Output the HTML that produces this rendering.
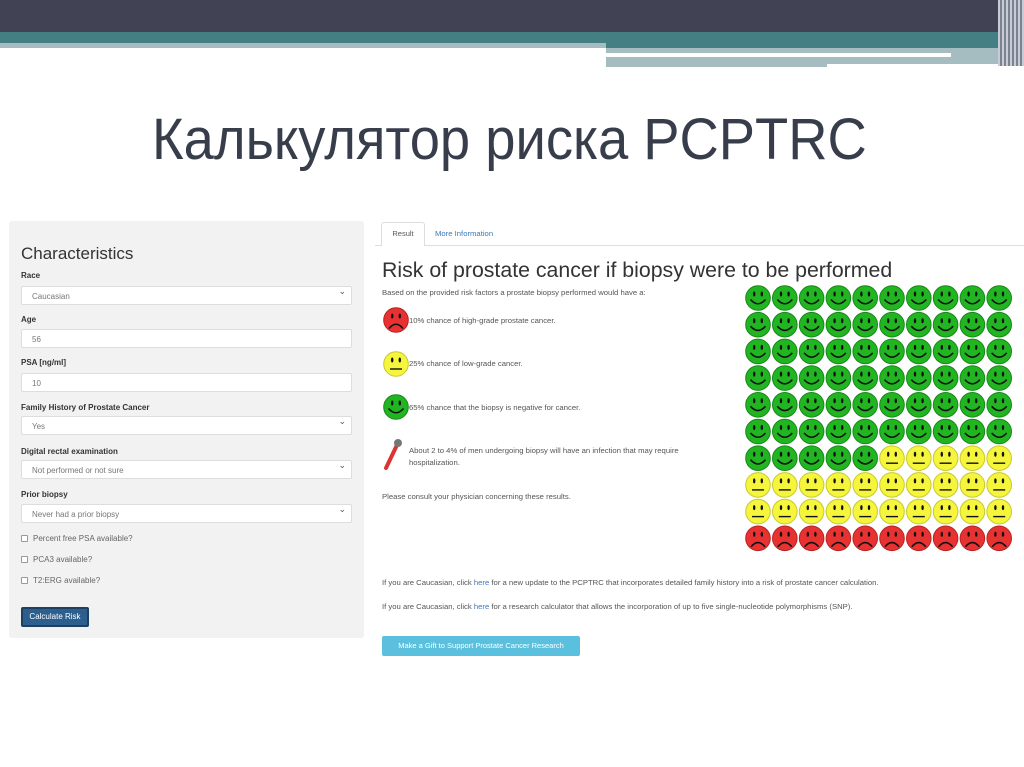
<!DOCTYPE html>
<html><head><meta charset="utf-8"><style>
*{margin:0;padding:0;box-sizing:border-box}
body{width:1024px;height:767px;background:#fff;position:relative;overflow:hidden;font-family:"Liberation Sans",Arial,sans-serif}
.a{position:absolute}
.lbl{position:absolute;left:21px;font-size:8px;font-weight:bold;color:#333}
.inp{position:absolute;left:21px;width:331px;height:19px;background:#fff;border:1px solid #ddd;border-radius:2px;font-size:8px;color:#777;padding:5px 0 0 10px}
.inp.s:after{content:"⌄";position:absolute;right:5px;top:-1px;font-size:9px;color:#555}
.cb{position:absolute;left:21px;font-size:8px;color:#666}
.cb i{display:inline-block;width:7px;height:7px;border:1px solid #999;border-radius:1px;margin-right:5px;vertical-align:-1px;background:#fff}
.t{position:absolute;font-size:7.7px;color:#555;white-space:nowrap}
.t b{font-weight:normal;color:#3a78b8}
</style></head><body>
<div class="a" style="left:0;top:0;width:1024px;height:32px;background:#414354"></div>
<div class="a" style="left:0;top:32px;width:1024px;height:16px;background:#447f84"></div>
<div class="a" style="left:0;top:43px;width:606px;height:5px;background:#a5bcc0"></div>
<div class="a" style="left:606px;top:48px;width:418px;height:19px;background:#a5bcc0"></div>
<div class="a" style="left:606px;top:53px;width:345px;height:4px;background:#fff"></div>
<div class="a" style="left:827px;top:64px;width:197px;height:4px;background:#fff"></div>
<div class="a" style="left:998px;top:0;width:26px;height:66px;background:repeating-linear-gradient(90deg,#c8ccd4 0 2px,#7d8292 2px 4px)"></div>

<div class="a" style="left:152px;top:106px;font-size:58px;color:#383d4b;white-space:nowrap;transform:scaleX(0.937);transform-origin:left top">Калькулятор риска PCPTRC</div>

<div class="a" style="left:9px;top:221px;width:355px;height:417px;background:#f2f2f2;border-radius:3px"></div>
<div class="a" style="left:21px;top:244px;font-size:17px;color:#333">Characteristics</div>
<div class="lbl" style="top:271px">Race</div>
<div class="inp s" style="top:286px">Caucasian</div>
<div class="lbl" style="top:315px">Age</div>
<div class="inp" style="top:329px">56</div>
<div class="lbl" style="top:358px">PSA [ng/ml]</div>
<div class="inp" style="top:373px">10</div>
<div class="lbl" style="top:403px">Family History of Prostate Cancer</div>
<div class="inp s" style="top:416px">Yes</div>
<div class="lbl" style="top:447px">Digital rectal examination</div>
<div class="inp s" style="top:460px">Not performed or not sure</div>
<div class="lbl" style="top:490px">Prior biopsy</div>
<div class="inp s" style="top:504px">Never had a prior biopsy</div>
<div class="cb" style="top:534px"><i></i>Percent free PSA available?</div>
<div class="cb" style="top:555px"><i></i>PCA3 available?</div>
<div class="cb" style="top:576px"><i></i>T2:ERG available?</div>
<div class="a" style="left:21px;top:607px;width:68px;height:20px;background:#2d5f8e;border:2px solid #1d3f60;border-radius:2px;color:#fff;font-size:8px;text-align:center;line-height:16px">Calculate Risk</div>

<div class="a" style="left:375px;top:245px;width:649px;height:1px;background:#ddd"></div>
<div class="a" style="left:381px;top:222px;width:44px;height:24px;background:#fff;border:1px solid #ddd;border-bottom:none;border-radius:3px 3px 0 0;font-size:7.5px;color:#555;text-align:center;line-height:22px">Result</div>
<div class="t" style="left:435px;top:229px;color:#3a78b8">More Information</div>
<div class="a" style="left:382px;top:258px;font-size:21.3px;color:#333;white-space:nowrap">Risk of prostate cancer if biopsy were to be performed</div>
<div class="t" style="left:382px;top:288px">Based on the provided risk factors a prostate biopsy performed would have a:</div>

<svg width="0" height="0" style="position:absolute"><defs>
<g id="G"><circle r="12.3" fill="#22b522" stroke="#17881a" stroke-width="1"/><ellipse cx="-3.8" cy="-4" rx="1.2" ry="2.5" fill="#111"/><ellipse cx="3.8" cy="-4" rx="1.2" ry="2.5" fill="#111"/><path d="M-7.5 1.5Q0 10 7.5 1.5" fill="none" stroke="#111" stroke-width="1.6"/></g>
<g id="Y"><circle r="12.3" fill="#f5f53c" stroke="#c8c832" stroke-width="1"/><ellipse cx="-3.8" cy="-4" rx="1.2" ry="2.5" fill="#111"/><ellipse cx="3.8" cy="-4" rx="1.2" ry="2.5" fill="#111"/><path d="M-6 5H6" stroke="#111" stroke-width="1.4"/></g>
<g id="R"><circle r="12.3" fill="#e83232" stroke="#b82222" stroke-width="1"/><ellipse cx="-3.8" cy="-4" rx="1.2" ry="2.5" fill="#111"/><ellipse cx="3.8" cy="-4" rx="1.2" ry="2.5" fill="#111"/><path d="M-7 8.5Q0 0 7 8.5" fill="none" stroke="#111" stroke-width="1.6"/></g>
<g id="GR"><use href="#G"/><use href="#G" x="26.8"/><use href="#G" x="53.6"/><use href="#G" x="80.4"/><use href="#G" x="107.2"/><use href="#G" x="134"/><use href="#G" x="160.8"/><use href="#G" x="187.6"/><use href="#G" x="214.4"/><use href="#G" x="241.2"/></g>
<g id="YR"><use href="#Y"/><use href="#Y" x="26.8"/><use href="#Y" x="53.6"/><use href="#Y" x="80.4"/><use href="#Y" x="107.2"/><use href="#Y" x="134"/><use href="#Y" x="160.8"/><use href="#Y" x="187.6"/><use href="#Y" x="214.4"/><use href="#Y" x="241.2"/></g>
<g id="RR"><use href="#R"/><use href="#R" x="26.8"/><use href="#R" x="53.6"/><use href="#R" x="80.4"/><use href="#R" x="107.2"/><use href="#R" x="134"/><use href="#R" x="160.8"/><use href="#R" x="187.6"/><use href="#R" x="214.4"/><use href="#R" x="241.2"/></g>
</defs></svg>

<svg class="a" style="left:744px;top:284px" width="272" height="272">
<g transform="translate(14,14)">
<use href="#GR"/><use href="#GR" y="26.7"/><use href="#GR" y="53.4"/><use href="#GR" y="80.1"/><use href="#GR" y="106.8"/><use href="#GR" y="133.5"/>
<g transform="translate(0,160.2)"><use href="#G"/><use href="#G" x="26.8"/><use href="#G" x="53.6"/><use href="#G" x="80.4"/><use href="#G" x="107.2"/><use href="#Y" x="134"/><use href="#Y" x="160.8"/><use href="#Y" x="187.6"/><use href="#Y" x="214.4"/><use href="#Y" x="241.2"/></g>
<use href="#YR" y="186.9"/><use href="#YR" y="213.6"/><use href="#RR" y="240.3"/>
</g></svg>

<svg class="a" style="left:382px;top:306px" width="28" height="28"><use href="#R" x="14" y="14"/></svg>
<div class="t" style="left:409px;top:316px">10% chance of high-grade prostate cancer.</div>
<svg class="a" style="left:382px;top:350px" width="28" height="28"><use href="#Y" x="14" y="14"/></svg>
<div class="t" style="left:409px;top:359px">25% chance of low-grade cancer.</div>
<svg class="a" style="left:382px;top:393px" width="28" height="28"><use href="#G" x="14" y="14"/></svg>
<div class="t" style="left:409px;top:403px">65% chance that the biopsy is negative for cancer.</div>
<svg class="a" style="left:382px;top:437px" width="24" height="34"><path d="M4 31L15 8" stroke="#d33" stroke-width="4" stroke-linecap="round"/><circle cx="16" cy="6" r="4" fill="#777"/></svg>
<div class="t" style="left:409px;top:445px;line-height:12px">About 2 to 4% of men undergoing biopsy will have an infection that may require<br>hospitalization.</div>
<div class="t" style="left:382px;top:492px">Please consult your physician concerning these results.</div>
<div class="t" style="left:382px;top:578px">If you are Caucasian, click <b>here</b> for a new update to the PCPTRC that incorporates detailed family history into a risk of prostate cancer calculation.</div>
<div class="t" style="left:382px;top:602px">If you are Caucasian, click <b>here</b> for a research calculator that allows the incorporation of up to five single-nucleotide polymorphisms (SNP).</div>
<div class="a" style="left:382px;top:636px;width:198px;height:20px;background:#5bc0de;border-radius:2px;color:#fff;font-size:7.5px;text-align:center;line-height:20px">Make a Gift to Support Prostate Cancer Research</div>
</body></html>
